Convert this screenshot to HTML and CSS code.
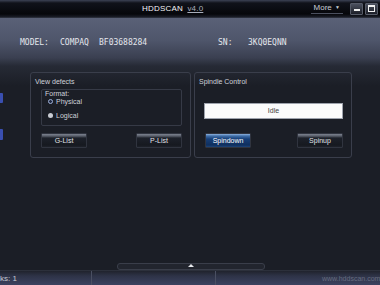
FILE: index.html
```html
<!DOCTYPE html>
<html lang="en">
<head>
  <meta charset="UTF-8">
  <title>HDDScan</title>
  <link rel="stylesheet" href="styles.css">
</head>
<body>
  <div class="titlebar">
    <div class="title">HDDSCAN <span class="ver">v4.0</span></div>
    <div class="more">More <span class="caret">&#9660;</span></div>
    <div class="winbtn"><span class="dash"></span></div>
    <div class="winbtn"><span class="box"></span></div>
  </div>

  <div class="header">
    <span class="lbl">MODEL:</span>
    <span class="vendor">COMPAQ</span><span class="model">BF03688284</span>
    <span class="lbl sn">SN:</span><span class="val">3KQ0EQNN</span>
  </div>

  <div class="main">
    <div class="sidebar">
      <span class="tab"></span>
      <span class="tab tab2"></span>
    </div>

    <div class="group defects">
      <div class="gtitle">View defects</div>
      <div class="format">
        <div class="ftitle">Format:</div>
        <div class="radio physical"><span class="dot on"></span>Physical</div>
        <div class="radio"><span class="dot"></span>Logical</div>
      </div>
      <div class="btnrow">
        <button class="btn">G-List</button>
        <button class="btn">P-List</button>
      </div>
    </div>

    <div class="group spindle">
      <div class="gtitle">Spindle Control</div>
      <div class="state">Idle</div>
      <div class="btnrow">
        <button class="btn blue">Spindown</button>
        <button class="btn">Spinup</button>
      </div>
    </div>
  </div>

  <div class="handle"><span class="grip"></span></div>

  <div class="statusbar">
    <div class="cell cell-blocks">ks: 1</div>
    <div class="cell cell-mid"></div>
    <div class="cell cell-site">www.hddscan.com</div>
  </div>
</body>
</html>
```

FILE: styles.css
```css
body {
  margin: 0;
  width: 380px;
  height: 285px;
  overflow: hidden;
  font-family: "Liberation Sans", Arial, sans-serif;
  font-size: 7px;
  color: #d6d9e0;
  background: #1b1e26;
  display: flex;
  flex-direction: column;
}

/* title bar */
.titlebar {
  height: 17px;
  display: flex;
  align-items: center;
  background: linear-gradient(#3c4254 0, #10121a 3px, #06070b 14px, #1a1d27 17px);
  border-bottom: 1px solid #2a2e3a;
}
.title {
  margin-left: 142px;
  color: #f2f3f6;
  font-size: 8px;
  letter-spacing: 0.2px;
}
.ver {
  margin-left: 2px;
  color: #a9aebb;
  text-decoration: underline;
}
.more {
  margin-left: auto;
  margin-right: 7px;
  padding: 0 3px 1px;
  color: #c9ccd4;
  font-size: 8px;
  border-bottom: 1px solid #4a4f5e;
}
.caret { font-size: 5px; vertical-align: 1px; margin-left: 1px; }
.winbtn {
  width: 11px;
  height: 10px;
  margin-right: 2px;
  border: 1px solid #565b68;
  border-radius: 1px;
  background: linear-gradient(#4b505e, #1c1f28);
  display: flex;
  align-items: center;
  justify-content: center;
}
.dash { width: 6px; height: 2px; background: #f0f0f0; margin-top: 2px; }
.box { width: 5px; height: 4px; border: 1px solid #f0f0f0; border-top-width: 2px; }

/* drive info */
.header {
  height: 48px;
  padding-left: 20px;
  display: flex;
  align-items: center;
  background: linear-gradient(#5a6177 0, #4f566b 22px, #3a3f50 40px, #262a35 48px);
  font-family: "DejaVu Sans Mono", monospace;
  font-size: 8px;
  color: #e4e6ec;
}
.header span { flex-shrink: 0; }
.lbl { width: 40px; }
.vendor { width: 39px; }
.model { width: 119px; }
.lbl.sn { width: 30px; }

/* main panels */
.main {
  display: flex;
  align-items: flex-start;
  padding-top: 6px;
  background: linear-gradient(#262a35, #1b1e26 20px);
}
.sidebar {
  width: 3px;
  display: flex;
  flex-direction: column;
  padding-top: 21px;
  gap: 26px;
}
.tab {
  height: 10px;
  background: #3a4fb0;
  border-radius: 0 1px 1px 0;
}
.tab2 { height: 11px; }
.group {
  height: 86px;
  border: 1px solid #3a3e4b;
  border-radius: 3px;
  box-sizing: border-box;
  padding: 4px 8px 0;
  display: flex;
  flex-direction: column;
  color: #cfd2da;
}
.defects { width: 161px; margin-left: 27px; }
.spindle { width: 158px; margin-left: 3px; }
.gtitle { margin-left: -4px; line-height: 9px; }

.format {
  height: 37px;
  margin-top: 3px;
  margin-left: 2px;
  border: 1px solid #363a46;
  border-radius: 2px;
  padding: 0 3px;
  box-sizing: border-box;
}
.ftitle { line-height: 7px; }
.radio {
  display: flex;
  align-items: center;
  height: 14px;
  margin-left: 3px;
}
.radio.physical { margin-top: -3px; }
.dot {
  width: 5px;
  height: 5px;
  border-radius: 50%;
  background: #c9ccd3;
  margin-right: 3px;
}
.dot.on {
  width: 3px;
  height: 3px;
  background: #1d2740;
  border: 1px solid #9fb0d6;
}

.btnrow {
  display: flex;
  justify-content: space-between;
  margin-top: auto;
  margin-bottom: 9px;
  padding-left: 2px;
}
.btn {
  width: 46px;
  height: 15px;
  padding: 0;
  border: 1px solid #30343f;
  border-radius: 1px;
  background: linear-gradient(#7c828f 0, #5a5f6b 2px, #1d212a 4px, #161920 11px, #262a33 15px);
  color: #e0e2e8;
  font-family: "Liberation Sans", Arial, sans-serif;
  font-size: 7px;
}
.btn.blue {
  background: linear-gradient(#8fb3de 0, #3f6ea8 2px, #173f78 5px, #0f2f5e 11px, #2c5a94 15px);
  color: #ffffff;
}

.state {
  height: 14px;
  margin: 17px 0 0 1px;
  background: #fbfbfb;
  border: 1px solid #9ea3ad;
  color: #444;
  text-align: center;
  line-height: 14px;
}

/* splitter */
.handle {
  margin-top: auto;
  height: 7px;
  display: flex;
  justify-content: center;
  align-items: center;
  border-bottom: 1px solid #2c303b;
}
.grip {
  width: 146px;
  height: 5px;
  margin-left: 1px;
  border: 1px solid #3a3e4a;
  border-radius: 3px;
  background: #22252e;
  position: relative;
}
.grip::after {
  content: "";
  position: absolute;
  left: 70px;
  top: 0;
  border: 3px solid transparent;
  border-bottom: 3px solid #e8eaee;
  border-top: 0;
}

/* status bar */
.statusbar {
  height: 14px;
  display: flex;
  background: linear-gradient(#20232d, #2e3347 5px, #3c4260 14px);
  color: #c6c9d2;
  font-size: 8px;
}
.cell { display: flex; align-items: center; flex-shrink: 0; }
.cell-blocks { width: 91px; border-right: 1px solid #4a4f62; }
.cell-mid { width: 123px; border-right: 1px solid #4a4f62; }
.cell-site {
  padding-left: 106px;
  color: #666c80;
  font-size: 7px;
  white-space: nowrap;
}
```
